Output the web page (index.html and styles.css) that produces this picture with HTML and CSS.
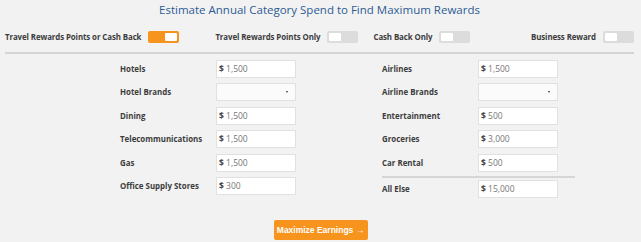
FILE: index.html
```html
<!DOCTYPE html>
<html>
<head>
<meta charset="utf-8">
<link rel="stylesheet" href="styles.css">
</head>
<body>
<div class="page">
  <h1 class="title">Estimate Annual Category Spend to Find Maximum Rewards</h1>
  <div class="toggles">
    <div class="toggle-item t1"><span class="tlabel">Travel Rewards Points or Cash Back</span><span class="switch on"><span class="knob"></span></span></div>
    <div class="toggle-item t2"><span class="tlabel">Travel Rewards Points Only</span><span class="switch"><span class="knob"></span></span></div>
    <div class="toggle-item t3"><span class="tlabel">Cash Back Only</span><span class="switch"><span class="knob"></span></span></div>
    <div class="toggle-item t4"><span class="tlabel">Business Reward</span><span class="switch"><span class="knob"></span></span></div>
  </div>
  <div class="rule"></div>
  <div class="form">
    <div class="col">
      <div class="row"><span class="label">Hotels</span><div class="field"><b>$</b> 1,500</div></div>
      <div class="row"><span class="label">Hotel Brands</span><div class="field select"><span class="caret"></span></div></div>
      <div class="row"><span class="label">Dining</span><div class="field"><b>$</b> 1,500</div></div>
      <div class="row"><span class="label">Telecommunications</span><div class="field"><b>$</b> 1,500</div></div>
      <div class="row"><span class="label">Gas</span><div class="field"><b>$</b> 1,500</div></div>
      <div class="row"><span class="label">Office Supply Stores</span><div class="field"><b>$</b> 300</div></div>
    </div>
    <div class="col">
      <div class="row"><span class="label">Airlines</span><div class="field"><b>$</b> 1,500</div></div>
      <div class="row"><span class="label">Airline Brands</span><div class="field select"><span class="caret"></span></div></div>
      <div class="row"><span class="label">Entertainment</span><div class="field"><b>$</b> 500</div></div>
      <div class="row"><span class="label">Groceries</span><div class="field"><b>$</b> 3,000</div></div>
      <div class="row"><span class="label">Car Rental</span><div class="field"><b>$</b> 500</div></div>
      <div class="divider"></div>
      <div class="row"><span class="label">All Else</span><div class="field"><b>$</b> 15,000</div></div>
    </div>
  </div>
  <div class="actions"><button class="btn">Maximize Earnings &#8594;</button></div>
</div>
</body>
</html>
```
FILE: styles.css
```css
* { box-sizing: border-box; }
html, body { margin: 0; padding: 0; }
body {
  background: #f2f2f2;
  font-family: "Open Sans", "Liberation Sans", sans-serif;
  width: 641px;
  height: 242px;
  overflow: hidden;
}
.page { padding: 0 7px 0 5px; }
.title {
  margin: 0;
  padding-top: 2px;
  font-size: 11.5px;
  line-height: 16px;
  font-weight: 400;
  color: #2d5b94;
  text-align: center;
}
.toggles {
  display: flex;
  align-items: center;
  margin-top: 12px;
  height: 13px;
}
.toggle-item { display: flex; align-items: center; }
.tlabel {
  font-size: 7.9px;
  font-weight: 700;
  letter-spacing: -0.1px;
  color: #3d3d3d;
  margin-right: 7px;
}
.t2 { margin-left: 36px; }
.t3 { margin-left: 15px; }
.t4 { margin-left: auto; }
.switch {
  position: relative;
  display: inline-block;
  width: 31px;
  height: 12px;
  border-radius: 2px;
  background: #dcdcdc;
}
.switch .knob {
  position: absolute;
  top: 2px;
  left: 2px;
  width: 12px;
  height: 8px;
  border-radius: 1px;
  background: #fff;
}
.switch.on { background: #f7941d; }
.switch.on .knob { left: auto; right: 2px; }
.rule {
  height: 2px;
  background: #d4d4d4;
  margin-top: 9px;
}
.form {
  display: flex;
  gap: 69px;
  margin-left: 115px;
  margin-top: 6px;
}
.col {
  width: 193px;
  display: flex;
  flex-direction: column;
  gap: 5.4px;
}
.row { display: flex; align-items: center; }
.label {
  width: 96px;
  font-size: 7.9px;
  font-weight: 700;
  color: #3d3d3d;
}
.field {
  position: relative;
  width: 80px;
  height: 18px;
  line-height: 16px;
  background: #fff;
  border: 1px solid #e1e1e1;
  padding-left: 2px;
  font-size: 8.5px;
  color: #777;
}
.field b { color: #444; font-weight: 700; }
.select { background: #fbfbfb; }
.caret {
  position: absolute;
  right: 7px;
  top: 7px;
  width: 0;
  height: 0;
  border-top: 2px solid #333;
  border-left: 1.5px solid transparent;
  border-right: 1.5px solid transparent;
}
.divider {
  height: 2px;
  background: #d6d6d6;
  margin: -1px 0 -3px;
}
.actions {
  text-align: center;
  margin-top: 18px;
  padding-left: 2px;
}
.btn {
  width: 94px;
  height: 20px;
  border: none;
  border-radius: 2px;
  background: #f7941d;
  color: #fff;
  font-family: "Liberation Sans", Arial, sans-serif;
  font-weight: 700;
  font-size: 8.5px;
  padding: 0;
}
```
